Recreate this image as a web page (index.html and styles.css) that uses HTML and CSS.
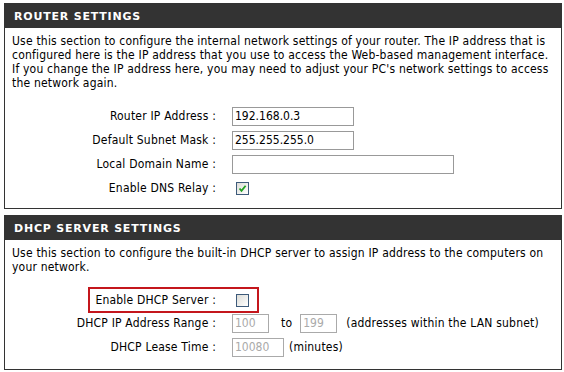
FILE: index.html
```html
<!DOCTYPE html>
<html lang="en">
<head>
  <meta charset="UTF-8" />
  <title>Network Settings</title>
  <link rel="stylesheet" href="styles.css">
</head>
<body>
  <div class="box">
    <h2>Router Settings</h2>
    <p>Use this section to configure the internal network settings of your router. The IP address that is configured here is the IP address that you use to access the Web-based management interface. If you change the IP address here, you may need to adjust your PC's network settings to access the network again.</p>
    <div class="form">
      <div class="row">
        <label>Router IP Address :</label>
        <input type="text" class="ip" value="192.168.0.3">
      </div>
      <div class="row">
        <label>Default Subnet Mask :</label>
        <input type="text" class="ip" value="255.255.255.0">
      </div>
      <div class="row">
        <label>Local Domain Name :</label>
        <input type="text" class="domain" value="">
      </div>
      <div class="row">
        <label>Enable DNS Relay :</label>
        <span class="check on"><svg viewBox="0 0 13 13" width="13" height="13"><path d="M3.5 6.5 L5.5 8.8 L9.6 3.8" fill="none" stroke="#21a121" stroke-width="1.8"/></svg></span>
      </div>
    </div>
  </div>

  <div class="box second">
    <h2>DHCP Server Settings</h2>
    <p>Use this section to configure the built-in DHCP server to assign IP address to the computers on your network.</p>
    <div class="form">
      <div class="row marked">
        <span class="highlight"></span>
        <label>Enable DHCP Server :</label>
        <span class="check"></span>
      </div>
      <div class="row">
        <label>DHCP IP Address Range :</label>
        <input type="text" class="small" value="100" disabled>
        <span class="note to">to</span>
        <input type="text" class="small" value="199" disabled>
        <span class="note range">(addresses within the LAN subnet)</span>
      </div>
      <div class="row">
        <label>DHCP Lease Time :</label>
        <input type="text" class="lease" value="10080" disabled>
        <span class="note">(minutes)</span>
      </div>
    </div>
  </div>
</body>
</html>
```

FILE: styles.css
```css
body {
  margin: 0;
  padding: 3px 0 0 0;
  background: #fff;
  color: #000;
  font-family: "DejaVu Sans Condensed", "Liberation Sans", sans-serif;
  font-size: 12px;
  letter-spacing: 0.2px;
}
.box {
  margin: 0 2px 0 4px;
  border: 1px solid #333;
  border-top: none;
  height: 206px;
  box-sizing: border-box;
}
.box.second {
  margin-top: 6px;
  height: 155px;
}
h2 {
  margin: 0 -1px;
  height: 25px;
  background: #333;
  color: #fff;
  font-family: "DejaVu Sans", sans-serif;
  font-size: 11px;
  font-weight: bold;
  text-transform: uppercase;
  letter-spacing: 0.8px;
  line-height: 27px;
  padding-left: 10px;
}
p {
  margin: 6px 0 0 0;
  padding: 0 6px 0 7px;
  line-height: 14px;
}
.form {
  margin-top: 14px;
}
.second .form {
  margin-top: 13px;
}
.row {
  position: relative;
  display: flex;
  align-items: center;
  height: 24px;
}
.row label {
  width: 211px;
  text-align: right;
  margin-right: 16px;
  flex: none;
}
input {
  font-family: inherit;
  font-size: 12px;
  letter-spacing: 0;
  height: 19px;
  box-sizing: border-box;
  border: 1px solid #999;
  padding: 0 2px;
  margin: 0;
  color: #000;
  background: #fff;
}
input:disabled {
  color: #aaa;
  border-color: #aaa;
  background: #fff;
}
.ip { width: 122px; }
.domain { width: 222px; }
.small { width: 37px; }
.lease { width: 52px; }
.check {
  display: block;
  width: 13px;
  height: 13px;
  box-sizing: border-box;
  border: 1px solid #3d5a7a;
  background: linear-gradient(135deg, #dcdcd7, #fff);
  margin-left: 4px;
}
.check svg {
  display: block;
  margin: -1px;
}
.note {
  margin-left: 5px;
}
.note.to {
  margin: 0 8px 0 12px;
}
.note.range {
  margin-left: 9px;
}
.marked {
  height: 26px;
  margin-bottom: -2px;
}
.highlight {
  position: absolute;
  left: 83px;
  top: 0;
  width: 171px;
  height: 26px;
  box-sizing: border-box;
  border: 2px solid #c4161c;
}
```
